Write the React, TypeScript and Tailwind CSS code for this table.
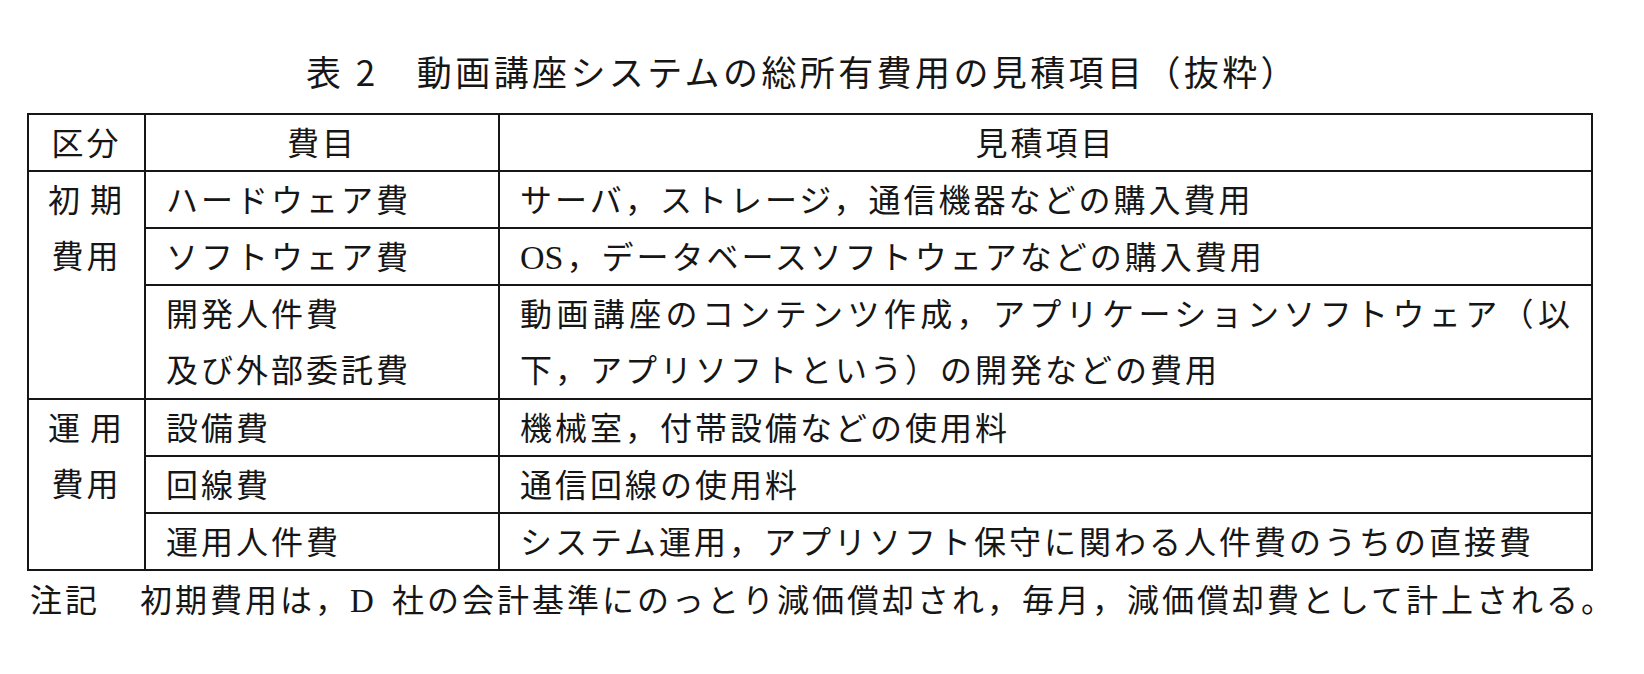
import type { ReactNode } from 'react';
import clsx from 'clsx';

const line = 'border-[#161616]';

function Row({ name, item, tall, last }: { name: ReactNode; item: ReactNode; tall?: boolean; last?: boolean }) {
  const h = tall ? (last ? 'h-[112px]' : 'h-[114px]') : last ? 'h-[55px]' : 'h-[57px]';
  return (
    <div className={clsx('flex', h, !last && 'border-b-2', line)}>
      <div className={clsx('w-[354px] shrink-0 border-r-2 pl-[20px]', line)}>
        <div className="-mt-[2px] leading-[56px]">{name}</div>
      </div>
      <div className="flex-1 pl-[20px] pr-[18px]">
        <div className="-mt-[2px] leading-[56px]">{item}</div>
      </div>
    </div>
  );
}

function Group({ label, children, bottom }: { label: ReactNode; children: ReactNode; bottom?: boolean }) {
  return (
    <div className={clsx('flex', bottom && 'border-b-2', line)}>
      <div className={clsx('w-[117px] shrink-0 border-r-2 text-center', line)}>
        <div className="-mt-[2px] leading-[56px]">{label}</div>
      </div>
      <div className="flex-1 flex flex-col">{children}</div>
    </div>
  );
}

const serif = "font-['Liberation_Serif',serif] tracking-normal";

export default function App() {
  return (
    <div className="w-[1644px] h-[674px] overflow-hidden bg-white text-[#161616] font-['Noto_Sans_CJK_JP','Noto_Sans_CJK_SC',sans-serif]">
      <h1 className="pt-[49px] pl-[306px] text-[35px] leading-[44px] tracking-[3.4px] font-normal whitespace-nowrap">
        表 2　動画講座システムの総所有費用の見積項目（抜粋）
      </h1>

      <div className={clsx('ml-[27px] mt-[20px] w-[1566px] border-2 text-[32px] tracking-[3px] whitespace-nowrap', line)}>
        {/* header */}
        <div className={clsx('flex h-[57px] border-b-2', line)}>
          <div className={clsx('w-[117px] shrink-0 border-r-2 text-center', line)}>
            <div className="-mt-[2px] leading-[56px]">区分</div>
          </div>
          <div className={clsx('w-[354px] shrink-0 border-r-2 text-center', line)}>
            <div className="-mt-[2px] leading-[56px]">費目</div>
          </div>
          <div className="flex-1 text-center">
            <div className="-mt-[2px] leading-[56px]">見積項目</div>
          </div>
        </div>

        <Group
          bottom
          label={
            <>
              <div>初<span className="tracking-normal"> </span>期</div>
              <div>費用</div>
            </>
          }
        >
          <Row name="ハードウェア費" item="サーバ，ストレージ，通信機器などの購入費用" />
          <Row
            name="ソフトウェア費"
            item={
              <>
                <span className={clsx(serif, 'text-[34px] mr-[3px]')}>OS</span>，データベースソフトウェアなどの購入費用
              </>
            }
          />
          <Row
            tall
            last
            name={
              <>
                <div>開発人件費</div>
                <div>及び外部委託費</div>
              </>
            }
            item={
              <>
                <div className="text-justify [text-align-last:justify]">動画講座のコンテンツ作成，アプリケーションソフトウェア（以</div>
                <div>下，アプリソフトという）の開発などの費用</div>
              </>
            }
          />
        </Group>

        <Group
          label={
            <>
              <div>運<span className="tracking-normal"> </span>用</div>
              <div>費用</div>
            </>
          }
        >
          <Row name="設備費" item="機械室，付帯設備などの使用料" />
          <Row name="回線費" item="通信回線の使用料" />
          <Row last name="運用人件費" item="システム運用，アプリソフト保守に関わる人件費のうちの直接費" />
        </Group>
      </div>

      <p className="ml-[30px] mt-[5px] text-[32px] leading-[44px] tracking-[3px] whitespace-nowrap">
        <span className="mr-[5px]">注記　</span>初期費用は，<span className={clsx(serif, 'text-[33px] mr-[8px]')}>D</span> 社の会計基準にのっとり減価償却され，毎月，減価償却費として計上される。
      </p>
    </div>
  );
}
